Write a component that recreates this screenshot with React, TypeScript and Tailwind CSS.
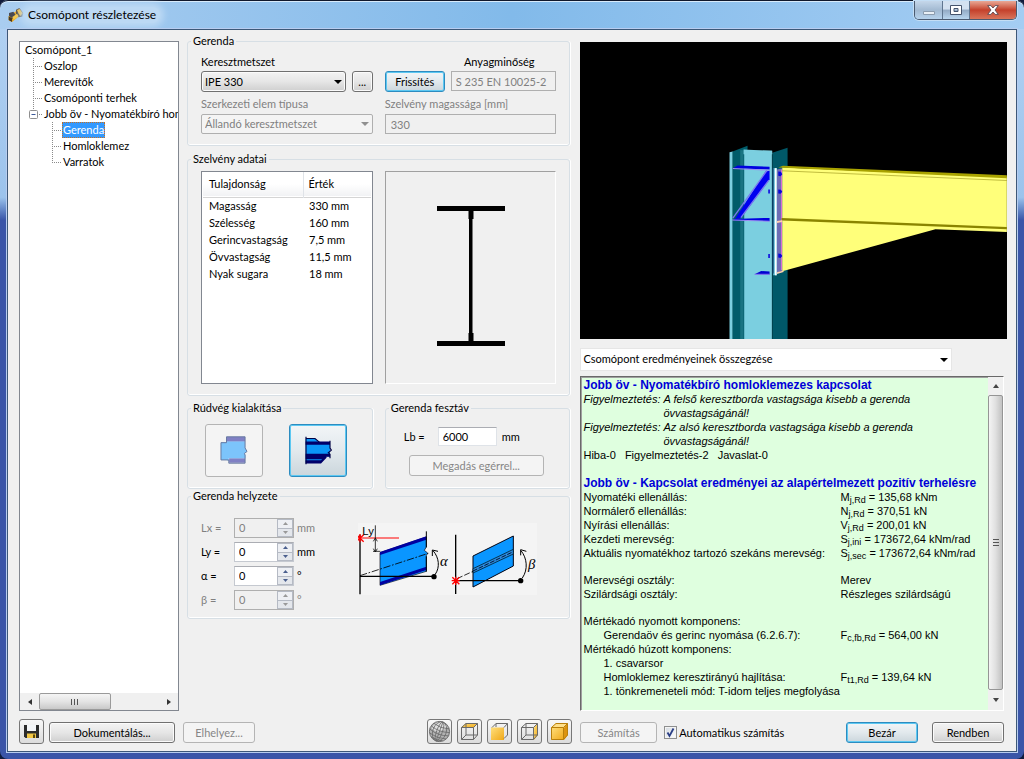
import React, { useState } from "react";

const UI = "font-['Lato','Liberation_Sans',sans-serif]";

const BTN =
  "rounded-[3px] border border-[#707070] bg-linear-to-b from-[#f3f3f3] from-0% via-[#e6e6e6] via-50% to-[#cfcfcf] to-100% shadow-[inset_0_0_0_1px_#fbfbfb] text-black";
const BTN_FOCUS =
  "rounded-[3px] border border-[#2d8cc0] bg-linear-to-b from-[#f2f5f7] from-0% via-[#e2e9ed] via-50% to-[#cbd6dc] to-100% shadow-[inset_0_0_0_1px_#5cc8f2] text-black";
const BTN_OFF = "rounded-[3px] border border-[#b4b4b4] bg-[#f4f4f4] text-[#868686]";
const ICON_BTN =
  "flex h-[25px] w-[25px] items-center justify-center rounded-[3px] border border-[#777] bg-linear-to-b from-[#f8f8f8] to-[#dcdcdc]";

function Group({ title, className = "", children }: { title: string; className?: string; children: React.ReactNode }) {
  return (
    <fieldset className={`min-w-0 rounded-[3px] border border-[#d7dfe5] shadow-[inset_0_-1px_0_#fff,1px_0_0_#fff] ${className}`}>
      <legend className="ml-[3px] h-[14px] px-0.5 leading-[14px]">{title}</legend>
      {children}
    </fieldset>
  );
}

function Arrow({ className = "" }: { className?: string }) {
  return (
    <svg viewBox="0 0 8 4" className={`pointer-events-none absolute h-1 w-2 ${className}`} aria-hidden="true">
      <path d="M0 0h8L4 4z" fill="currentColor" />
    </svg>
  );
}

function TitleBar() {
  return (
    <header className="flex h-[29px] shrink-0 items-start justify-between rounded-t-lg border-t border-[#10182c] bg-linear-to-r from-[#a9cdf0] from-0% via-[#82baea] via-50% to-[#a4cdf3] to-100% pl-2 pr-[7px] shadow-[inset_0_1px_0_#d8ebfb]">
      <div className="flex h-7 items-center">
        <svg viewBox="0 0 48 48" className="h-4 w-4" aria-hidden="true">
          <path d="M2 28L24 13l9 15-21 17-10-5z" fill="#e8a51c" />
          <path d="M2 28l10 6v11L2 39z" fill="#4a3a20" />
          <path d="M3 18l13-4 10 14-11 8-12-10z" fill="#4a4a52" />
          <path d="M24 8l10-5 12 15-3 11-12 2-7-10z" fill="#55483a" />
          <path d="M27 9l8-3 9 13-7 8-6-8z" fill="#f4bf3d" />
          <path d="M13 30l14-10 5 8-15 11z" fill="#f7c846" />
        </svg>
        <h1 className="rounded-full bg-[#bcd9f4] px-1 text-xs leading-4 shadow-[0_0_6px_4px_#bcd9f4]">
          Csomópont részletezése
        </h1>
      </div>
      <div className="flex h-[19px] overflow-hidden rounded-b-[5px] border border-t-0 border-[#4a5a70] shadow-[0_0_0_1px_#c4def5]">
        <button aria-label="Kis méret" className="flex w-7 items-end justify-center border-r border-[#5f7690] bg-linear-to-b from-[#c5d7ea] via-[#a3bad2] via-50% to-[#b6d2ec] pb-1">
          <svg viewBox="0 0 12 4" className="h-1 w-3"><path d="M.5.5h11v3H.5z" fill="#e9eff5" stroke="#8c9cae" /></svg>
        </button>
        <button aria-label="Teljes méret" className="flex w-[27px] items-center justify-center border-r border-[#5f7690] bg-linear-to-b from-[#d3e1f0] from-45% via-[#93aac4] via-50% to-[#b9d6ef]">
          <svg viewBox="0 0 12 10" className="h-2.5 w-3">
            <path d="M.5.5h11v9H.5zM4 3.5h4v3H4z" fill="#fff" stroke="#46546c" fillRule="evenodd" />
          </svg>
        </button>
        <button aria-label="Bezárás" className="flex w-[46px] items-center justify-center bg-linear-to-b from-[#e8a896] from-0% via-[#c4402b] via-50% to-[#d9745a]">
          <svg viewBox="0 0 12 10" className="h-2.5 w-3">
            <path d="M.7.6h3.2L6 3l2.100-2.400h3.200L8 5l3.300 4.400H8.100L6 7 3.900 9.400H.7L4 5z" fill="#fff" stroke="#5a4750" strokeWidth=".9" />
          </svg>
        </button>
      </div>
    </header>
  );
}

const LEAVES = ["Oszlop", "Merevítők", "Csomóponti terhek"];
const CHILDREN = ["Gerenda", "Homloklemez", "Varratok"];

function Twig({ last = false }: { last?: boolean }) {
  return (
    <svg viewBox="0 0 10 16" className="h-4 w-2.5 shrink-0" aria-hidden="true">
      <path d={last ? "M.5 0V8" : "M.5 0V16"} stroke="#8a8a8a" strokeDasharray="1 1" />
      <path d="M0 8.500H9" stroke="#8a8a8a" strokeDasharray="1 1" />
    </svg>
  );
}

function Tree() {
  const [active, setActive] = useState("Gerenda");
  return (
    <nav className="mt-[7px] flex min-h-0 flex-col border border-[#828790] bg-white">
      <ul className="flex-1 overflow-hidden whitespace-nowrap leading-4">
        <li>
          <button className="pl-[5px]">Csomópont_1</button>
          <ul>
            {LEAVES.map((t) => (
              <li key={t} className="flex pl-[13px]">
                <Twig />
                <button className="pl-px">{t}</button>
              </li>
            ))}
            <li>
              <div className="flex items-center pl-[9px]">
                <svg viewBox="0 0 15 16" className="h-4 w-[15px] shrink-0" aria-hidden="true">
                  <path d="M4.500 0V4" stroke="#8a8a8a" strokeDasharray="1 1" />
                  <rect x=".5" y="4.500" width="8" height="8" rx="1" fill="#fff" stroke="#8f8f8f" />
                  <path d="M2.500 8.500h4" stroke="#3c5a9a" />
                  <path d="M10 8.500h4" stroke="#8a8a8a" strokeDasharray="1 1" />
                </svg>
                <button>Jobb öv - Nyomatékbíró hom</button>
              </div>
              <ul>
                {CHILDREN.map((t, i) => (
                  <li key={t} className="flex pl-8">
                    <Twig last={i === CHILDREN.length - 1} />
                    <button
                      onClick={() => setActive(t)}
                      className={
                        active === t
                          ? "border border-dotted border-[#c87020] bg-[#3399ff] leading-[14px] text-white"
                          : "border border-transparent leading-[14px]"
                      }
                    >
                      {t}
                    </button>
                  </li>
                ))}
              </ul>
            </li>
          </ul>
        </li>
      </ul>
      <div className="flex h-[17px] items-stretch bg-[#f0f0f0]">
        <button aria-label="Balra" className="flex w-[19px] items-center justify-center">
          <svg viewBox="0 0 4 6" className="h-1.5 w-1"><path d="M4 0v6L0 3z" fill="#333" /></svg>
        </button>
        <div className="flex w-[72px] items-center justify-center gap-px rounded-xs border border-[#9a9a9a] bg-linear-to-b from-[#f5f5f5] via-[#e4e4e4] to-[#c9c9c9]">
          <svg viewBox="0 0 8 6" className="h-1.5 w-2"><path d="M.5 0v6M3.500 0v6M6.500 0v6" stroke="#555" /></svg>
        </div>
        <div className="flex-1" />
        <button aria-label="Jobbra" className="flex w-[19px] items-center justify-center">
          <svg viewBox="0 0 4 6" className="h-1.5 w-1"><path d="M0 0v6L4 3z" fill="#333" /></svg>
        </button>
      </div>
    </nav>
  );
}

function BeamGroup() {
  return (
    <Group title="Gerenda" className="pb-[11px]">
      <div className="grid grid-cols-2 gap-x-3 px-[13px] pt-[7px]">
        <div className="min-w-0">
          <label htmlFor="section" className="block h-[14px] leading-[14px]">Keresztmetszet</label>
          <div className="mt-0.5 flex h-[21px] gap-1.5">
            <div className="relative flex-1">
              <select id="section" className={`h-full w-full appearance-none pl-[3px] ${BTN}`}>
                <option>IPE 330</option>
              </select>
              <Arrow className="right-1 top-[9px] text-black" />
            </div>
            <button className={`w-[21px] ${BTN}`}>...</button>
          </div>
        </div>
        <div className="min-w-0">
          <label htmlFor="grade" className="block h-[14px] pr-[22px] text-right leading-[14px]">Anyagminőség</label>
          <div className="mt-0.5 flex h-[21px] gap-1.5">
            <button className={`w-[60px] ${BTN_FOCUS}`}>Frissítés</button>
            <input id="grade" disabled defaultValue="S 235 EN 10025-2" className="h-5 min-w-0 flex-1 border border-[#afafaf] bg-[#f0f0f0] px-1 text-[#808080]" />
          </div>
        </div>
        <div className="min-w-0 pt-[5px] text-[#808080]">
          <label htmlFor="kind" className="block h-[14px] leading-[14px]">Szerkezeti elem típusa</label>
          <div className="relative mt-[3px] h-5">
            <select id="kind" disabled className="h-full w-full appearance-none rounded-xs border border-[#afafaf] bg-[#f4f4f4] pl-[3px] text-[#808080] opacity-100">
              <option>Állandó keresztmetszet</option>
            </select>
            <Arrow className="right-1 top-2 text-[#909090]" />
          </div>
        </div>
        <div className="min-w-0 pt-[5px] text-[#808080]">
          <label htmlFor="depth" className="block h-[14px] leading-[14px]">Szelvény magassága [mm]</label>
          <input id="depth" disabled defaultValue="330" className="mt-[3px] block h-5 w-full border border-[#afafaf] bg-[#f0f0f0] px-[5px] text-[#808080]" />
        </div>
      </div>
    </Group>
  );
}

const PROPS = [
  ["Magasság", "330 mm"],
  ["Szélesség", "160 mm"],
  ["Gerincvastagság", "7,5 mm"],
  ["Övvastagság", "11,5 mm"],
  ["Nyak sugara", "18 mm"],
];

function SectionGroup() {
  return (
    <Group title="Szelvény adatai" className="mt-1.5 pb-[11px]">
      <div className="grid grid-cols-2 gap-x-3 px-[13px] pt-[5px]">
        <div className="border border-[#828790] bg-white px-px">
          <table className="w-full table-fixed border-collapse text-left">
            <thead>
              <tr className="h-[25px] border-b border-[#d5d5d5] bg-linear-to-b from-white from-50% to-[#f1f2f4]">
                <th className="w-[100px] border-r border-[#dfe3e8] py-0 pl-1.5 font-normal">Tulajdonság</th>
                <th className="py-0 pl-[5px] font-normal">Érték</th>
              </tr>
            </thead>
            <tbody>
              {PROPS.map(([k, v]) => (
                <tr key={k} className="h-[17px]">
                  <td className="p-0 pl-1.5">{k}</td>
                  <td className="p-0 pl-1.5">{v}</td>
                </tr>
              ))}
            </tbody>
          </table>
        </div>
        <div className="flex h-[213px] items-center justify-center border border-b-white border-l-[#a0a0a0] border-r-white border-t-[#a0a0a0] pb-[3px]">
          <svg viewBox="0 0 68 140" className="h-[140px] w-[68px]" aria-hidden="true">
            <path d="M0 0h68v5H36.500v8H35.500v114h1v8H68v5H0v-5h31.500v-8h.500V13h-.500V5H0z" />
          </svg>
        </div>
      </div>
    </Group>
  );
}

function EndGroups() {
  return (
    <div className="mt-[5px] grid grid-cols-2 gap-x-3">
      <Group title="Rúdvég kialakítása" className="pb-[11px]">
        <div className="flex gap-[26px] pl-[17px] pt-[9px]">
          <button aria-label="Egyszerű rúdvég" disabled className={`flex h-[53px] w-[58px] items-center justify-center ${BTN_OFF}`}>
            <svg viewBox="106 136 86 88" className="h-[29px] w-7">
              <path d="M126 138h57v15h-57zM134 204h49v14h-49z" fill="#8080c4" />
              <path d="M127 152h56v20l6 11-8 6 3 5v10h-50v-1h-1v8h-4v-1h-1v-1h-19v-54h18z" fill="#7cc4fb" />
              <path d="M126 138h57v34l6 11-8 6 2 5v25h-50v-10h-24v-53h17z" fill="none" stroke="#6478a0" strokeWidth="3" />
            </svg>
          </button>
          <button aria-label="Kiékelt rúdvég" className={`flex h-[53px] w-[58px] items-center justify-center ${BTN_FOCUS}`}>
            <svg viewBox="360 138 84 86" className="h-[29px] w-7">
              <path d="M365 145h28l12 12h33v42h-12l-17 18h-44z" fill="#0a96f8" />
              <path d="M365 154h73v10h-73zM365 191h73v9h-11l-4 7h-58zM365 210h46l10-9h8l-18 19h-46z" fill="#00006a" />
              <path d="M366 140v82M365 145h28l13 11M438 152v22l4 6-9 8 5 4v12" fill="none" stroke="#000044" strokeWidth="3.500" />
            </svg>
          </button>
        </div>
      </Group>
      <Group title="Gerenda fesztáv" className="pb-[11px]">
        <div className="flex items-center px-[18px] pt-3">
          <label htmlFor="span" className="w-[34px]">Lb =</label>
          <input id="span" defaultValue="6000" className="h-[19px] w-[59px] border border-[#dfe3e8] border-t-[#abadb3] bg-white px-1" />
          <span className="pl-[5px]">mm</span>
        </div>
        <button disabled className={`ml-[23px] mt-[9px] h-[21px] w-[135px] ${BTN_OFF}`}>Megadás egérrel...</button>
      </Group>
    </div>
  );
}

function Spin({ id, label, unit, disabled = false }: { id: string; label: string; unit: string; disabled?: boolean }) {
  const [v, setV] = useState(0);
  return (
    <div className={`flex h-5 items-center ${disabled ? "text-[#808080]" : ""}`}>
      <label htmlFor={id} className="w-[33px]">{label} =</label>
      <div className={`flex h-5 w-[60px] border ${disabled ? "border-[#afafaf] bg-[#f0f0f0]" : "border-[#c5c9d0] border-t-[#abadb3] bg-white"}`}>
        <input
          id={id}
          disabled={disabled}
          value={v}
          onChange={(e) => setV(Number(e.target.value) || 0)}
          className="min-w-0 flex-1 pl-1"
        />
        <div className="flex w-4 flex-col">
          <button aria-label={`${label} növelése`} disabled={disabled} onClick={() => setV(v + 1)} className="flex flex-1 items-center justify-center border border-[#b5bac4] bg-[#eef0f4]">
            <svg viewBox="0 0 5 3" className="h-[3px] w-[5px]"><path d="M0 3h5L2.500 0z" fill={disabled ? "#999" : "#4a5f8e"} /></svg>
          </button>
          <button aria-label={`${label} csökkentése`} disabled={disabled} onClick={() => setV(v - 1)} className="flex flex-1 items-center justify-center border border-t-0 border-[#b5bac4] bg-[#e4e7ec]">
            <svg viewBox="0 0 5 3" className="h-[3px] w-[5px]"><path d="M0 0h5L2.500 3z" fill={disabled ? "#999" : "#4a5f8e"} /></svg>
          </button>
        </div>
      </div>
      <span className="pl-[3px]">{unit}</span>
    </div>
  );
}

function PositionGroup() {
  return (
    <Group title="Gerenda helyzete" className="pb-2">
      <div className="flex items-start px-[13px] pt-[15px]">
        <div className="flex w-[157px] flex-col gap-1">
          <Spin id="lx" label="Lx" unit="mm" disabled />
          <Spin id="ly" label="Ly" unit="mm" />
          <Spin id="alpha" label="α" unit="°" />
          <Spin id="beta" label="β" unit="°" disabled />
        </div>
        <svg viewBox="519 115 537 216" className="mt-[5px] h-[72px] w-[179px]" aria-hidden="true">
          <path d="M519 115h537v216H519z" fill="#f4f4f4" />
          <path d="M585 204l139-47v30l-6 10 10 8-4 8v47l-139 42z" fill="#0a96ff" stroke="#001" strokeWidth="2" />
          <path d="M585 202l139-47v10l-139 46zM585 292l139-46v10l-139 46z" fill="#0000a0" />
          <path d="M724 140v48M724 215v46" stroke="#000" strokeWidth="3" />
          <path d="M525 150v179M525 275h222" stroke="#000" strokeWidth="4" fill="none" />
          <path d="M525 273l205-67" stroke="#000" strokeWidth="2.500" strokeDasharray="22 5 5 5" />
          <path d="M518 160h124" stroke="#f00" strokeWidth="3.500" />
          <path d="M514 150l22 21M536 150l-22 21M525 148v25" stroke="#f00" strokeWidth="4" />
          <path d="M571 122v80M564 200h22M565 170l6-10 6 10M565 192l6 10 6-10" stroke="#111" strokeWidth="2.500" fill="none" />
          <text x="532" y="152" fontSize="34" fontFamily="Liberation Sans, sans-serif">Ly</text>
          <circle cx="747" cy="276" r="8" />
          <path d="M750 270c16-22 12-52-6-72M742 214v-18l17 4" stroke="#000" strokeWidth="3" fill="none" />
          <text x="765" y="244" fontSize="44" fontFamily="Liberation Serif, serif" fontStyle="italic">α</text>
          <path d="M864 214l121-60v90l-121 63z" fill="#0a96ff" stroke="#001" strokeWidth="3" />
          <path d="M864 252l121-58v14l-121 57z" fill="#2a8ade" stroke="#023" strokeWidth="2.500" />
          <path d="M864 259l121-58" stroke="#001" strokeWidth="2.500" strokeDasharray="14 5" />
          <path d="M812 150v178M812 288h195" stroke="#000" strokeWidth="4" fill="none" />
          <path d="M816 282l48-22" stroke="#000" strokeWidth="2.500" strokeDasharray="18 6" />
          <path d="M802 278l21 21M823 278l-21 21M800 288h24M812 276v25" stroke="#f00" strokeWidth="4" />
          <circle cx="1007" cy="288" r="8" />
          <path d="M1012 280c18-26 14-60-4-82M1007 212v-17l17 5" stroke="#000" strokeWidth="3" fill="none" />
          <text x="1029" y="252" fontSize="44" fontFamily="Liberation Serif, serif" fontStyle="italic">β</text>
        </svg>
      </div>
    </Group>
  );
}

function Viewport() {
  return (
    <svg viewBox="0 0 426 297" className="block h-auto w-full bg-black" aria-hidden="true">
      <g transform="translate(120 88) scale(.33333)">
        <path d="M128 62l87 0v566h-87z" fill="#7bcfe0" />
        <path d="M88 66l10-2v564H88z" fill="#7bcfe0" />
        <path d="M97 64l45-17v12l-10 4v565H97z" fill="#005c6a" />
        <path d="M120 60h10v568h-10z" fill="#1a7482" />
        <path d="M216 68l46-15v575h-46z" fill="#005868" />
        <path d="M130 58l86 4v10h-86z" fill="#7bcfe0" />
        <path d="M98 114l14-8 96 4v8z" fill="#0000e0" />
        <path d="M98 115l110 5" stroke="#9a8cf0" strokeWidth="3" />
        <path d="M196 124l12-2v26l-86 116-18 2z" fill="#0000f0" />
        <path d="M200 121L98 264M206 150l-84 112" stroke="#7a78ee" strokeWidth="4" />
        <path d="M98 266l110-3v10l-104-2z" fill="#0000e0" />
        <path d="M96 269l112 4" stroke="#9a8cf0" strokeWidth="3" />
        <path d="M163 432l20-10 25 2v9z" fill="#0000d0" />
        <path d="M163 432h45" stroke="#8a78f0" strokeWidth="3" />
        <path d="M204 178h5v12h-5zM204 371h5v12h-5z" fill="#1010e0" />
        <path d="M230 118l16-4v308l-16 5z" fill="#6e6eb4" />
        <path d="M244 118v302" stroke="#e070d8" strokeWidth="3" />
        <path d="M246 112l673 28v165l-214-8-459 126z" fill="#ffff7a" />
        <path d="M234 112l14-5 671 28v9z" fill="#a8a200" />
        <path d="M246 122l673 29" stroke="#a09a20" strokeWidth="2" />
        <path d="M244 263l675 27v7l-675-26z" fill="#8a8400" />
        <path d="M230 272l16-2v5l-16 3z" fill="#ffd0b0" />
        <path d="M230 426l20-5v4l-20 6z" fill="#ffd0b0" />
        <path d="M234 124l8 1 4 7-5 6-7-1zM234 178l8 1 4 6-5 6-7-1zM234 370l8 1 4 6-5 6-7-1z" fill="#0808d8" />
        <path d="M219 114h11v321h-11z" fill="#70c4dc" />
        <path d="M224 114h5v321h-5z" fill="#fff" />
        <path d="M216 114h4v316h-4z" fill="#0d3f6a" />
      </g>
    </svg>
  );
}

function Row({ label, indent = false, children }: { label: string; indent?: boolean; children?: React.ReactNode }) {
  return (
    <div className="flex h-[14px]">
      <dt className={`w-[257px] shrink-0 ${indent ? "pl-5" : ""}`}>{label}</dt>
      {children ? <dd>{children}</dd> : null}
    </div>
  );
}

function Sub({ children }: { children: React.ReactNode }) {
  return <span className="relative top-0.5 text-[9px]">{children}</span>;
}

function Results() {
  return (
    <section className="flex min-h-0 flex-1 border border-b-white border-l-[#696969] border-r-white border-t-[#696969] bg-[#dfffdf] shadow-[inset_1px_1px_0_#a0a0a0]">
      <div className="flex-1 overflow-hidden whitespace-nowrap pb-2 pl-0.5 pt-px font-['Liberation_Sans',Arial,sans-serif] text-[11px] leading-[14px]">
        <h2 className="text-xs font-bold leading-[14px] text-[#0000d8]">Jobb öv - Nyomatékbíró homloklemezes kapcsolat</h2>
        {["A felső", "Az alsó"].map((t) => (
          <p key={t} className="flex italic">
            <span className="w-20 shrink-0">Figyelmeztetés:</span>
            <span>
              {t} keresztborda vastagsága kisebb a gerenda
              <br />
              övvastagságánál!
            </span>
          </p>
        ))}
        <p className="flex gap-[9px]">
          <span>Hiba-0</span>
          <span>Figyelmeztetés-2</span>
          <span>Javaslat-0</span>
        </p>
        <h2 className="mt-[14px] text-xs font-bold leading-[14px] text-[#0000d8]">
          Jobb öv - Kapcsolat eredményei az alapértelmezett pozitív terhelésre
        </h2>
        <dl>
          <Row label="Nyomatéki ellenállás:">M<Sub>j,Rd</Sub> = 135,68 kNm</Row>
          <Row label="Normálerő ellenállás:">N<Sub>j,Rd</Sub> = 370,51 kN</Row>
          <Row label="Nyírási ellenállás:">V<Sub>j,Rd</Sub> = 200,01 kN</Row>
          <Row label="Kezdeti merevség:">S<Sub>j,ini</Sub> = 173672,64 kNm/rad</Row>
          <Row label="Aktuális nyomatékhoz tartozó szekáns merevség:">S<Sub>j,sec</Sub> = 173672,64 kNm/rad</Row>
        </dl>
        <dl className="mt-[13px]">
          <Row label="Merevségi osztály:">Merev</Row>
          <Row label="Szilárdsági osztály:">Részleges szilárdságú</Row>
        </dl>
        <dl className="mt-[13px]">
          <Row label="Mértékadó nyomott komponens:" />
          <Row label="Gerendaöv és gerinc nyomása (6.2.6.7):" indent>F<Sub>c,fb,Rd</Sub> = 564,00 kN</Row>
          <Row label="Mértékadó húzott komponens:" />
          <Row label="1. csavarsor" indent />
          <Row label="Homloklemez keresztirányú hajlítása:" indent>F<Sub>t1,Rd</Sub> = 139,64 kN</Row>
          <Row label="1. tönkremeneteli mód: T-idom teljes megfolyása" indent />
        </dl>
      </div>
      <div className="flex w-[15px] shrink-0 flex-col bg-[#f0f0f0]">
        <button aria-label="Fel" className="flex h-[18px] items-center justify-center">
          <svg viewBox="0 0 6 4" className="h-1 w-1.5"><path d="M0 4h6L3 0z" fill="#444" /></svg>
        </button>
        <div className="flex flex-1 items-center justify-center rounded-xs border border-[#959595] bg-linear-to-r from-[#f4f4f4] via-[#e0e0e0] to-[#c2c2c2]">
          <svg viewBox="0 0 6 8" className="h-2 w-1.5"><path d="M0 .5h6M0 3.500h6M0 6.500h6" stroke="#555" /></svg>
        </div>
        <button aria-label="Le" className="flex h-5 items-center justify-center">
          <svg viewBox="0 0 6 4" className="h-1 w-1.5"><path d="M0 0h6L3 4z" fill="#444" /></svg>
        </button>
      </div>
    </section>
  );
}

function Cube({ face }: { face: "top" | "front" | "right" | "all" }) {
  const solid = face === "all";
  return (
    <svg viewBox="0 0 21 21" className="h-[21px] w-[21px]" aria-hidden="true">
      <defs>
        <linearGradient id={`gold-${face}`} x1="0" y1="0" x2="1" y2="1">
          <stop offset="0" stopColor="#ffdf7c" />
          <stop offset="1" stopColor="#f0a818" />
        </linearGradient>
      </defs>
      {(face === "top" || solid) && <path d="M2 6.500L7 2h12l-4 4.500z" fill={solid ? "#ffe08a" : `url(#gold-${face})`} />}
      {(face === "front" || solid) && <path d="M2 6.500h13V19H2z" fill={`url(#gold-${face})`} />}
      {(face === "right" || solid) && <path d="M15 6.500L19 2v12l-4 5z" fill={solid ? "#dc9410" : `url(#gold-${face})`} />}
      <g fill="none" stroke={solid ? "#b9800c" : "#6a6a6a"} strokeWidth="1">
        {face === "front" ? (
          <path d="M7 6V2.500h11.500V14L15 17.500M15 6.500l3.500-4M7 2.500l-4 4" />
        ) : (
          <path d="M2.500 6.500h12V18.500h-12zM2.500 6.500l4.500-4h11.500l-4 4M18.500 2.500V14l-4 4.500" />
        )}
        {(face === "top" || face === "right") && <path d="M7 2.500V14h11.500M7 14l-4.500 4.500" />}
      </g>
    </svg>
  );
}

function Globe() {
  return (
    <svg viewBox="0 0 24 24" className="h-[23px] w-[23px]" aria-hidden="true">
      <circle cx="12" cy="12" r="10.500" fill="#b2b2b2" stroke="#666" />
      <path d="M4 9a9 9 0 0 1 9-7 9 8 0 0 1 7 5c-4 5-10 7-16 2z" fill="#dedede" />
      <g fill="none" stroke="#6a6a6a" strokeWidth=".8" transform="rotate(20 12 12)">
        <ellipse cx="12" cy="12" rx="3" ry="10.500" />
        <ellipse cx="12" cy="12" rx="7" ry="10.500" />
        <path d="M12 1.500v21M3.500 6q8.500 3 17 0M2 9.500q10 3.500 20 0M1.500 13q10.500 4 21 0M3 17q9 3 18 0M6 20q6 2 12 0" />
      </g>
    </svg>
  );
}

function Footer() {
  const [auto, setAuto] = useState(true);
  return (
    <footer className="flex h-10 items-center">
      <div className="flex min-w-0 flex-[552] items-center justify-between">
        <div className="flex items-center">
          <button aria-label="Mentés" className={ICON_BTN}>
            <svg viewBox="0 0 15 15" className="h-[15px] w-[15px]">
              <path d="M0 1h15v13H1.500L0 12.500z" fill="#2c2c2c" />
              <path d="M3 1h9v6H3z" fill="#f4f6f8" />
              <path d="M3 9.500h9V14H3z" fill="#f3c845" />
              <path d="M9 10.500h2V14H9z" fill="#5c4a10" />
            </svg>
          </button>
          <button className={`ml-[5px] mt-[3px] h-[21px] w-[126px] ${BTN}`}>Dokumentálás...</button>
          <button disabled className={`ml-2 mt-[3px] h-[21px] w-[72px] ${BTN_OFF}`}>Elhelyez...</button>
        </div>
        <div className="flex gap-[5px]">
          <button aria-label="Térbeli nézet" className={ICON_BTN}><Globe /></button>
          <button aria-label="Felülnézet" className={ICON_BTN}><Cube face="top" /></button>
          <button aria-label="Elölnézet" className={ICON_BTN}><Cube face="front" /></button>
          <button aria-label="Oldalnézet" className={ICON_BTN}><Cube face="right" /></button>
          <button aria-label="Axonometria" className={ICON_BTN}><Cube face="all" /></button>
        </div>
      </div>
      <div className="ml-2 mt-[3px] flex min-w-0 flex-[426] items-center">
        <button disabled className={`h-[21px] w-[77px] ${BTN_OFF}`}>Számítás</button>
        <label className="ml-[7px] flex items-center gap-0.5 whitespace-nowrap">
          <span className="relative flex h-[13px] w-[13px]">
            <input
              type="checkbox"
              checked={auto}
              onChange={(e) => setAuto(e.target.checked)}
              className="h-[13px] w-[13px] appearance-none border border-[#8e8f8f] bg-linear-to-br from-[#d3d9e0] to-white shadow-[inset_0_0_0_1px_#f4f4f4]"
            />
            {auto && (
              <svg viewBox="0 0 13 13" className="pointer-events-none absolute inset-0">
                <path d="M3.500 6.500l2 3.500L9.500 2.500" fill="none" stroke="#2b3f86" strokeWidth="1.800" />
              </svg>
            )}
          </span>
          Automatikus számítás
        </label>
        <div className="flex-1" />
        <button className={`h-[21px] w-[72px] ${BTN_FOCUS}`}>Bezár</button>
        <button className={`ml-[14px] mr-[3px] h-[21px] w-[72px] ${BTN}`}>Rendben</button>
      </div>
    </footer>
  );
}

export default function App() {
  return (
    <div className="bg-[#101b3c]">
      <div className={`flex min-h-screen flex-col rounded-lg bg-linear-to-b from-[#b4d3f3] from-0% via-[#9cc3ec] via-26% to-[#3a55a8] to-29% text-[11px] leading-[14px] text-black ${UI}`}>
        <TitleBar />
        <main className="mx-[7px] mb-[7px] flex flex-1 flex-col border border-[#3d5878] bg-[#f0f0f0] pl-[11px] pr-[9px] shadow-[0_0_0_1px_#b8cdf0]">
          <div className="grid flex-1 grid-cols-[160px_minmax(0,383fr)_minmax(0,428fr)] gap-x-2 pt-1">
            <Tree />
            <div className="min-w-0">
              <BeamGroup />
              <SectionGroup />
              <EndGroups />
              <PositionGroup />
            </div>
            <div className="flex min-w-0 flex-col pl-0.5 pt-2">
              <Viewport />
              <div className="relative mr-[55px] mt-[9px] h-[23px]">
                <select aria-label="Eredmények" className="h-full w-full appearance-none border border-[#e6e6e6] bg-white pb-0.5 pl-0.5">
                  <option>Csomópont eredményeinek összegzése</option>
                </select>
                <Arrow className="right-1 top-2.5 text-black" />
              </div>
              <div className="mr-[3px] mt-[5px] flex flex-1">
                <Results />
              </div>
            </div>
          </div>
          <Footer />
        </main>
      </div>
    </div>
  );
}
